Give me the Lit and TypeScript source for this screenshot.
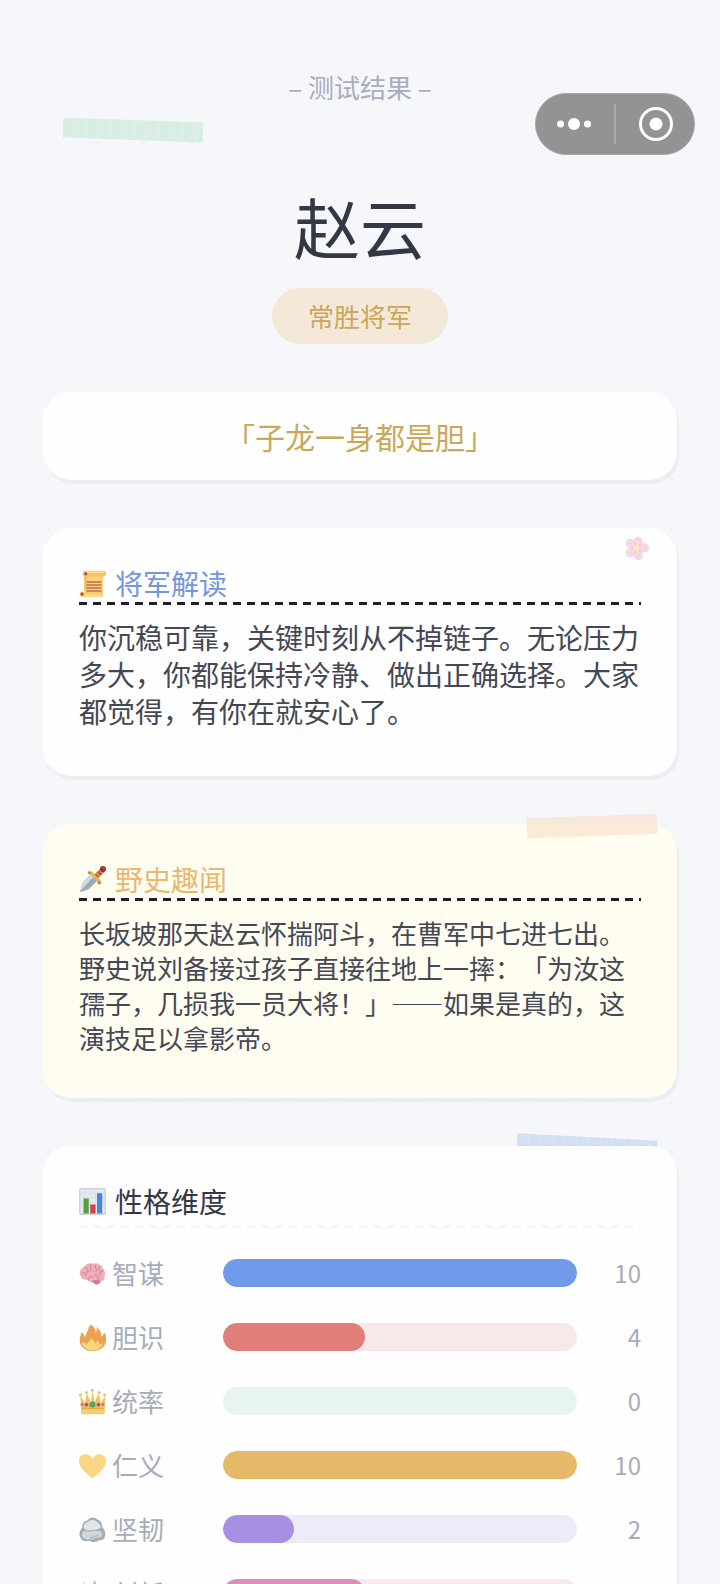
import { LitElement, html, css, svg, type TemplateResult } from "lit";
import { customElement, property } from "lit/decorators.js";
import { styleMap } from "lit/directives/style-map.js";

type IconName =
  | "scroll" | "dagger" | "chart" | "flower" | "brain"
  | "fire" | "crown" | "heart" | "rock" | "spark";

const ICONS: Record<IconName, TemplateResult> = {
  scroll: svg`
    <path d="M7 5h25v26H7z" fill="#fbd27b"/>
    <path d="M7 5h4v22H7z" fill="#f3bd62"/>
    <rect x="5" y="1" width="31" height="8" rx="4" fill="#f6c468"/>
    <path d="M11 3h21" stroke="#fde0a0" stroke-width="2" stroke-linecap="round"/>
    <rect x="1" y="29" width="31" height="7" rx="3" fill="#f9cc72"/>
    <path d="M9 34h19" stroke="#fde0a0" stroke-width="2" stroke-linecap="round"/>
    <circle cx="9" cy="5" r="2" fill="#8f4b35"/>
    <circle cx="4" cy="32" r="2" fill="#8f4b35"/>
    <path d="M10 16h20M10 20h20M10 24h20M10 28h20" stroke="#bd704c" stroke-width="2"/>`,
  dagger: svg`
    <path d="M1 35 5 22 16 11 25 19 13 31Z" fill="#9badb9"/>
    <path d="M1 35 5 22 16 11 20 15Z" fill="#ccd9e0"/>
    <path d="M3 33 19 16" stroke="#7b909e" stroke-width="1"/>
    <path d="m20 12 9-9 5 5-9 9Z" fill="#b4613f"/>
    <path d="m23 9 5 5m-1-9 5 5" stroke="#e59b75" stroke-width="2"/>
    <path d="M14 9c3-1 4 2 7 5s6 4 6 8" fill="none" stroke="#e8b64f" stroke-width="4" stroke-linecap="round"/>
    <circle cx="14" cy="9" r="2" fill="#c98f2f"/><circle cx="27" cy="22" r="2.500" fill="#c98f2f"/>
    <circle cx="32" cy="4" r="4" fill="#8c3130"/><circle cx="33" cy="3" r="1.500" fill="#c25b51"/>`,
  chart: svg`
    <rect x="1" y="1" width="34" height="34" rx="2" fill="#e6ebef" stroke="#ccd3d9" stroke-width="2"/>
    <path d="M2 7h32M2 13h32M2 19h32M2 25h32M8 2v32M15 2v32M22 2v32M29 2v32" stroke="#d6dce2" stroke-width="1"/>
    <path d="M6 14h7v20H6z" fill="#569e45"/>
    <path d="M15 22h7v12h-7z" fill="#cf3f50"/>
    <path d="M24 7h7v27h-7z" fill="#4289dc"/>`,
  flower: svg`
    <g fill="#ebb4c8">
      <circle cx="20" cy="8" r="7"/><circle cx="8" cy="11" r="7"/><circle cx="8" cy="25" r="7"/>
      <circle cx="20" cy="29" r="7"/><circle cx="29" cy="18" r="7"/><circle cx="17" cy="18" r="10"/>
    </g>
    <path d="m14 10 1 4m9-3-3 4m-13 3h5m11 4-3-2m-6 7 1-4" stroke="#dc8ba9" stroke-width="2"/>
    <circle cx="17" cy="18" r="5" fill="#f8d272"/>`,
  brain: svg`
    <path d="M2 21C-1 16 3 10 7 9c2-4 8-6 12-4 5-2 10 1 11 5 4 2 6 8 4 12 1 4-3 7-6 6-1 4-7 4-9 1-4 1-7 0-8-3-4 1-8-1-9-5Z" fill="#eeb0b8"/>
    <path d="M17 28c3-2 9-2 12 0-1 5-8 7-12 0Z" fill="#d57884"/>
    <path d="M4 18c3-3 6 0 5 3m-1-11c4 0 5 4 3 7m5-11c-3 3 2 5-1 9m7-8c-3 3 3 4 1 8m7-6c-4 0-5 4-2 6m4 0c-4 0-5 3-4 6M12 26c0-4 4-5 7-3m2-3c4 0 5 3 4 6" fill="none" stroke="#cc7482" stroke-width="1.200" stroke-linecap="round"/>`,
  fire: svg`
    <path d="M18 36C7 36 0 29 1 20c0-3 2-6 2-9 3 1 4 4 5 7 1-6 4-8 5-13 0-2 2-3 3-4 4 2 6 6 6 11 2-2 2-5 1-8 5 3 7 8 7 13 2-1 3-3 3-6 3 3 4 6 3 10 0 9-7 15-18 15Z" fill="#eba253"/>
    <path d="M18 35C9 35 4 30 4 25c3-1 6 1 7 3 0-4 4-5 5-9 3 2 5 4 5 7 2 0 3-2 3-4 2 1 3 3 3 5l4-1c1 5-5 9-13 9Z" fill="#fad77a"/>`,
  crown: svg`
    <path d="m2 10 6 10 2-13 6 12 2-15 3 15 5-12 3 13 6-10-1 24H3Z" fill="#efc25c"/>
    <path d="M3 29h31v6H3z" fill="#f3cd74"/>
    <path d="M4 27h28" stroke="#d79d37" stroke-width="1"/>
    <g fill="#ecc05e"><circle cx="2" cy="9" r="2"/><circle cx="10" cy="6" r="2"/><circle cx="18" cy="3" r="2"/><circle cx="27" cy="6" r="2"/><circle cx="34" cy="9" r="2"/></g>
    <circle cx="18" cy="22" r="4" fill="#5ba35d"/>
    <circle cx="10" cy="22" r="2.500" fill="#a253a2"/><circle cx="26" cy="22" r="2.500" fill="#a253a2"/>
    <circle cx="4" cy="22" r="2" fill="#db6970"/><circle cx="32" cy="22" r="2" fill="#db6970"/>`,
  heart: svg`
    <path d="M18 35C11 29 0 22 0 12 0 6 4 3 9 3c4 0 7 2 9 6 2-4 5-6 9-6 5 0 9 3 9 9 0 10-11 17-18 23Z" fill="#f8d684"/>`,
  rock: svg`
    <path d="M2 29c-3-4-1-10 2-13 0-6 3-9 7-10 4-5 10-5 14-1 4 1 6 5 6 10 4 4 5 9 3 14-2 4-6 3-9 4-4 3-8 2-11 0-5 1-10 1-12-4Z" fill="#a4adb3"/>
    <path d="M6 16c0-5 4-8 7-9 4-3 9-1 11 1 4 2 5 5 5 8-4 4-8 3-11 3-4 2-9 1-12-3Z" fill="#e1e5e8"/>
    <path d="M4 26c0-4 3-8 7-6 5 2 9-1 13 0 4-1 7 1 7 5 0 3-4 4-7 4s-5 3-8 2c-5 1-11 0-12-5Z" fill="#d0d6da"/>
    <path d="M6 18c4 3 8 2 12 1 4 1 8-1 11-3M14 29c5 1 7-3 12-3" fill="none" stroke="#96a1a8" stroke-width="1"/>`,
  spark: svg`
    <path d="m5 1 6 10 7-4 3-7 4 10 8-1-2 8 5 4-7 4 2 9-9-4-6 6-3-8-9 1 5-9-6-6 5-3Z" fill="#f0b25c"/>
    <path d="m11 13 5 1 3-4 2 5 6 2-5 3 1 6-6-3-5 4v-7l-5-3 5-1Z" fill="#fbe08d"/>`,
};

const FONT = css`"Noto Sans CJK SC", "Noto Sans", sans-serif`;

@customElement("emoji-icon")
export class EmojiIcon extends LitElement {
  static styles = css`
    :host { display: block; flex: none; width: 27px; height: 27px; }
    .glyph { display: block; width: 100%; height: 100%; }
  `;
  @property() name: IconName = "scroll";

  render() {
    return html`<svg class="glyph" viewBox="0 0 36 36" aria-hidden="true">${ICONS[this.name]}</svg>`;
  }
}

@customElement("result-card")
export class ResultCard extends LitElement {
  static styles = css`
    :host { display: block; }
    .card {
      padding: 36px 36px 46px;
      border-radius: 28px;
      background: #fefefe;
      box-shadow: 2px 4px 0 #ebedf3;
    }
    .note { padding-bottom: 43px; background: #fffcf0; }
    .title {
      display: flex;
      align-items: center;
      gap: 9px;
      margin: 0 0 14px;
      padding-bottom: 3px;
      font: 400 28px/38px ${FONT};
      background: repeating-linear-gradient(90deg, #202026 0 8px, transparent 8px 14px) bottom / 100% 3px no-repeat;
    }
    .blue { color: #7396dd; }
    .gold { color: #e8b870; }
    .ink {
      margin-bottom: 27px;
      padding-bottom: 8px;
      color: #343845;
      background-image: repeating-linear-gradient(90deg, #f4f5f7 0 8px, transparent 8px 14px);
    }
  `;
  @property() icon: IconName = "scroll";
  @property() heading = "";
  @property() tone = "blue";

  render() {
    return html`
      <section class="card ${this.tone === "gold" ? "note" : ""}">
        <h2 class="title ${this.tone}"><emoji-icon name=${this.icon}></emoji-icon>${this.heading}</h2>
        <slot></slot>
      </section>`;
  }
}

interface Trait {
  icon: IconName;
  label: string;
  score: number;
  fill: string;
  track: string;
}

const TRAITS: Trait[] = [
  { icon: "brain", label: "智谋", score: 10, fill: "#6f9bea", track: "#e5edfb" },
  { icon: "fire", label: "胆识", score: 4, fill: "#e07e7a", track: "#f8e8e7" },
  { icon: "crown", label: "统率", score: 0, fill: "#7cc9a5", track: "#e7f5ee" },
  { icon: "heart", label: "仁义", score: 10, fill: "#e6b969", track: "#faf2e3" },
  { icon: "rock", label: "坚韧", score: 2, fill: "#a790e1", track: "#eeebf8" },
  { icon: "spark", label: "创新", score: 4, fill: "#df8cba", track: "#f7e8f1" },
];

@customElement("trait-list")
export class TraitList extends LitElement {
  static styles = css`
    :host { display: block; }
    .list { display: grid; gap: 28px; margin: 0; padding: 0; list-style: none; }
    .row {
      display: grid;
      grid-template-columns: 144px 1fr 64px;
      align-items: center;
      font: 400 26px/36px ${FONT};
      color: #a6acba;
    }
    .label { display: flex; align-items: center; gap: 6px; }
    .track { height: 28px; border-radius: 14px; overflow: hidden; }
    .fill { height: 100%; border-radius: 14px; }
    .score { font-size: 24px; text-align: right; }
  `;

  render() {
    return html`
      <ul class="list">
        ${TRAITS.map((t) => html`
          <li class="row">
            <span class="label"><emoji-icon name=${t.icon}></emoji-icon>${t.label}</span>
            <div class="track" role="meter" aria-label=${t.label} aria-valuemin="0" aria-valuemax="10"
              aria-valuenow=${t.score} style=${styleMap({ background: t.track })}>
              <div class="fill" style=${styleMap({ width: `${t.score * 10}%`, background: t.fill })}></div>
            </div>
            <span class="score">${t.score}</span>
          </li>`)}
      </ul>`;
  }
}

@customElement("app-root")
export class AppRoot extends LitElement {
  static styles = css`
    :host {
      display: block;
      position: relative;
      height: 100vh;
      overflow: hidden;
      font-family: ${FONT};
      text-spacing-trim: space-all;
    }
    .page {
      box-sizing: border-box;
      height: 100%;
      overflow-y: auto;
      scrollbar-width: none;
      padding: 69px 43px 48px;
      background: radial-gradient(circle, #eff1f5 0 2px, transparent 3px) -24px -24px / 48px 48px #f6f7fb;
    }
    .intro {
      position: relative;
      display: flex;
      flex-direction: column;
      align-items: center;
    }
    .kicker { margin: 0; font-size: 26px; line-height: 36px; color: #a9adbb; }
    .name { margin: 74px 0 17px; font-size: 66px; font-weight: 400; line-height: 92px; color: #343845; }
    .rank {
      margin: 0;
      padding: 0 36px;
      border-radius: 28px;
      font-size: 26px;
      line-height: 56px;
      color: #caa75a;
      background: rgba(243, 223, 194, 0.6);
    }
    .stack { position: relative; z-index: 0; display: grid; gap: 48px; margin-top: 48px; }
    .quote {
      margin: 0;
      border-radius: 28px;
      font-size: 30px;
      line-height: 88px;
      text-align: center;
      color: #c9a959;
      background: #fefefe;
      box-shadow: 2px 4px 0 #ebedf3;
    }
    .slot { position: relative; }
    .text { margin: 0; color: #444754; }
    .lead { font-size: 28px; line-height: 37px; }
    .story { font-size: 26px; line-height: 35px; }
    .dash { font-variant-east-asian: full-width; }
    .tape {
      position: absolute;
      width: 140px;
      height: 20px;
      background: repeating-linear-gradient(90deg, transparent 0 11px, rgba(255, 255, 255, 0.2) 11px 12px) var(--tape);
    }
    .mint { --tape: #d8eee5; top: 51px; left: 20px; transform: rotate(2deg); }
    .peach { --tape: rgba(246, 221, 196, 0.6); top: -8px; right: 20px; width: 130px; transform: rotate(-2deg); }
    .sky { --tape: #d3dff6; z-index: -1; top: -9px; right: 20px; transform: rotate(3deg); }
    .petal { position: absolute; top: 8px; right: 28px; width: 24px; height: 24px; opacity: 0.5; }
    .capsule {
      position: absolute;
      top: 93px;
      right: 25px;
      box-sizing: border-box;
      display: flex;
      align-items: center;
      width: 160px;
      height: 62px;
      border: 1px solid #a5a6a8;
      border-radius: 31px;
      background: rgba(128, 129, 130, 0.85);
    }
    .action { flex: 1; height: 40px; padding: 0; border: 0; background: none; }
    .action + .action { border-left: 2px solid #a9aaab; }
    .mark { display: block; width: 40px; height: 40px; margin: 0 auto; fill: #fff; }
    .ring { fill: none; stroke: #fff; stroke-width: 3; }
  `;

  render() {
    return html`
      <main class="page" lang="zh-CN">
        <header class="intro">
          <p class="kicker">– 测试结果 –</p>
          <span class="tape mint"></span>
          <h1 class="name">赵云</h1>
          <p class="rank">常胜将军</p>
        </header>
        <div class="stack">
          <p class="quote">「子龙一身都是胆」</p>
          <div class="slot">
            <result-card icon="scroll" heading="将军解读" tone="blue">
              <p class="text lead">你沉稳可靠，关键时刻从不掉链子。无论压力多大，你都能保持冷静、做出正确选择。大家都觉得，有你在就安心了。</p>
            </result-card>
            <emoji-icon class="petal" name="flower"></emoji-icon>
          </div>
          <div class="slot">
            <result-card icon="dagger" heading="野史趣闻" tone="gold">
              <p class="text story">长坂坡那天赵云怀揣阿斗，在曹军中七进七出。野史说刘备接过孩子直接往地上一摔：「为汝这孺子，几损我一员大将！」<span class="dash">——</span>如果是真的，这演技足以拿影帝。</p>
            </result-card>
            <span class="tape peach"></span>
          </div>
          <div class="slot">
            <span class="tape sky"></span>
            <result-card icon="chart" heading="性格维度" tone="ink">
              <trait-list></trait-list>
            </result-card>
          </div>
        </div>
      </main>
      <nav class="capsule" aria-label="小程序">
        <button class="action" aria-label="更多">
          <svg class="mark" viewBox="0 0 40 40"><circle cx="5.500" cy="20" r="3.500"/><circle cx="19" cy="20" r="6"/><circle cx="32.500" cy="20" r="3.500"/></svg>
        </button>
        <button class="action" aria-label="关闭">
          <svg class="mark" viewBox="0 0 40 40"><circle class="ring" cx="21" cy="20" r="15.500"/><circle cx="21" cy="20" r="6.500"/></svg>
        </button>
      </nav>`;
  }
}
